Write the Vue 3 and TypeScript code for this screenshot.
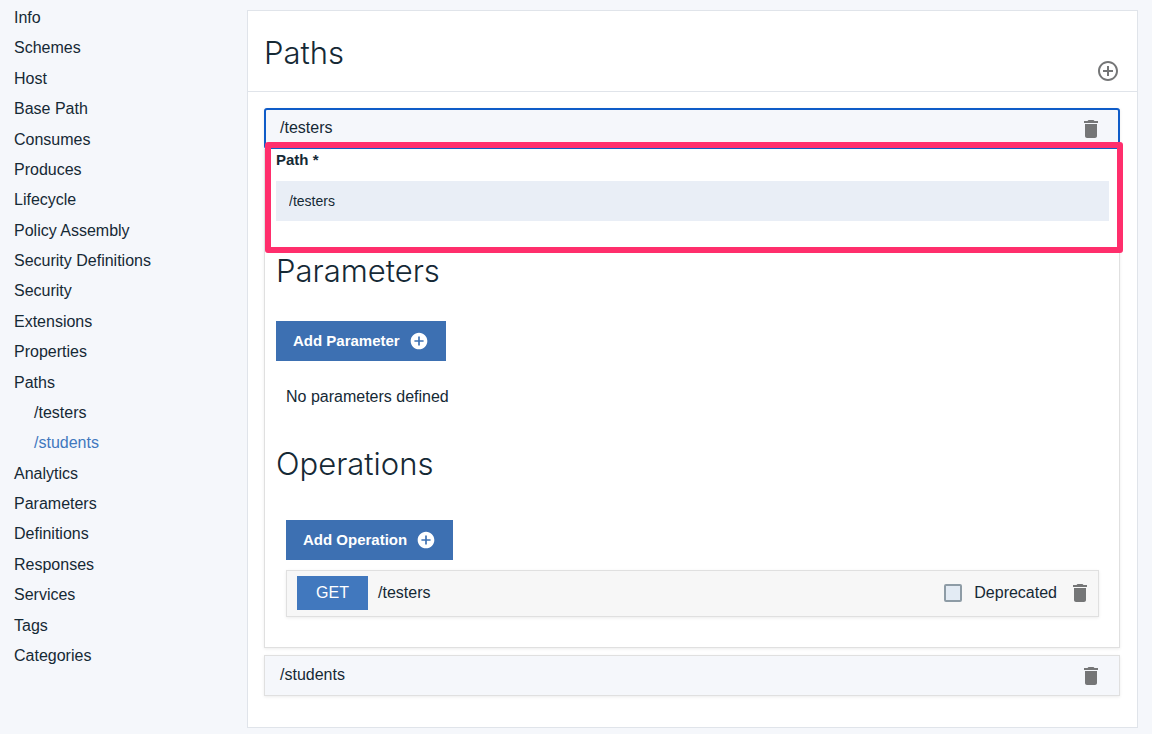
<script setup lang="ts">
import { ref } from 'vue'

interface NavItem {
  label: string
  nested?: boolean
  active?: boolean
}

const navItems: NavItem[] = [
  { label: 'Info' },
  { label: 'Schemes' },
  { label: 'Host' },
  { label: 'Base Path' },
  { label: 'Consumes' },
  { label: 'Produces' },
  { label: 'Lifecycle' },
  { label: 'Policy Assembly' },
  { label: 'Security Definitions' },
  { label: 'Security' },
  { label: 'Extensions' },
  { label: 'Properties' },
  { label: 'Paths' },
  { label: '/testers', nested: true },
  { label: '/students', nested: true, active: true },
  { label: 'Analytics' },
  { label: 'Parameters' },
  { label: 'Definitions' },
  { label: 'Responses' },
  { label: 'Services' },
  { label: 'Tags' },
  { label: 'Categories' },
]

const path = ref<string>('/testers')
const deprecated = ref<boolean>(false)

const trash =
  'M6 19c0 1.1.9 2 2 2h8c1.1 0 2-.9 2-2V7H6v12zM19 4h-3.5l-1-1h-5l-1 1H5v2h14V4z'
const addFilled =
  'M12 2C6.48 2 2 6.48 2 12s4.48 10 10 10 10-4.48 10-10S17.52 2 12 2zm5.5 11h-4.500v4.500h-2v-4.500H6.500v-2h4.500V6.500h2v4.500h4.500v2z'
const addOutline =
  'M13 7h-2v4H7v2h4v4h2v-4h4v-2h-4V7zm-1-5C6.48 2 2 6.48 2 12s4.48 10 10 10 10-4.48 10-10S17.52 2 12 2zm0 18c-4.41 0-8-3.59-8-8s3.59-8 8-8 8 3.59 8 8-3.59 8-8 8z'
</script>

<template>
  <div class="page">
    <nav class="sidebar" aria-label="API sections">
      <ul class="nav-list">
        <li v-for="item in navItems" :key="item.label">
          <a href="#" class="nav-link" :class="{ nested: item.nested, active: item.active }">{{ item.label }}</a>
        </li>
      </ul>
    </nav>

    <main class="content">
      <section class="card">
        <header class="card-header">
          <h1 class="title">Paths</h1>
          <button type="button" class="icon-button" aria-label="Add path">
            <svg viewBox="0 0 24 24" width="24" height="24"><path :d="addOutline" /></svg>
          </button>
        </header>

        <div class="card-body">
          <article class="panel">
            <div class="panel-header selected">
              <button type="button" class="toggle" aria-expanded="true">/testers</button>
              <button type="button" class="icon-button" aria-label="Delete /testers">
                <svg viewBox="0 0 24 24" width="24" height="24"><path :d="trash" /></svg>
              </button>
            </div>

            <div class="panel-body">
              <div class="field">
                <label class="field-label" for="path-input">Path *</label>
                <input id="path-input" v-model="path" class="field-input" type="text" />
                <div class="highlight" aria-hidden="true"></div>
              </div>

              <section class="group">
                <h2 class="title">Parameters</h2>
                <button type="button" class="add-button">
                  <span>Add Parameter</span>
                  <svg viewBox="0 0 24 24" width="20" height="20"><path :d="addFilled" /></svg>
                </button>
                <p class="empty">No parameters defined</p>
              </section>

              <section class="group operations">
                <h2 class="title">Operations</h2>
                <div class="inset">
                  <button type="button" class="add-button">
                    <span>Add Operation</span>
                    <svg viewBox="0 0 24 24" width="20" height="20"><path :d="addFilled" /></svg>
                  </button>
                  <div class="operation">
                    <span class="method">GET</span>
                    <span class="operation-path">/testers</span>
                    <input id="deprecated" v-model="deprecated" class="checkbox" type="checkbox" />
                    <label class="checkbox-label" for="deprecated">Deprecated</label>
                    <button type="button" class="icon-button" aria-label="Delete operation">
                      <svg viewBox="0 0 24 24" width="24" height="24"><path :d="trash" /></svg>
                    </button>
                  </div>
                </div>
              </section>
            </div>
          </article>

          <article class="panel">
            <div class="panel-header">
              <button type="button" class="toggle" aria-expanded="false">/students</button>
              <button type="button" class="icon-button" aria-label="Delete /students">
                <svg viewBox="0 0 24 24" width="24" height="24"><path :d="trash" /></svg>
              </button>
            </div>
          </article>
        </div>
      </section>
    </main>
  </div>
</template>

<style>
body {
  margin: 0;
  background: #f5f7fb;
}
</style>

<style scoped>
.page,
.page * {
  box-sizing: border-box;
}

.page {
  display: grid;
  grid-template-columns: 247px 1fr;
  min-height: 100vh;
  color: #152935;
  font-family: "Liberation Sans", Arial, sans-serif;
  font-size: 16px;
  line-height: 24px;
}

button,
input {
  font: inherit;
  color: inherit;
}

/* Sidebar */
.sidebar {
  display: flex;
  padding: 3px 14px 64px;
}

.nav-list {
  display: flex;
  flex-direction: column;
  justify-content: space-between;
  margin: 0;
  padding: 0;
  list-style: none;
}

.nav-link {
  display: block;
  line-height: 30px;
  color: inherit;
  text-decoration: none;
}

.nav-link.nested {
  padding-left: 20px;
}

.nav-link.active {
  color: #4178be;
}

/* Main card */
.content {
  padding: 10px 14px 7px 0;
}

.card {
  background: #fff;
  border: 1px solid #e0e4ea;
}

.card-header {
  display: flex;
  align-items: flex-end;
  justify-content: space-between;
  padding: 24px 17px 8px 16px;
  border-bottom: 1px solid #e0e4ea;
}

.card-header .title {
  padding-bottom: 12px;
}

.title {
  margin: 0;
  font-family: Inter, "Liberation Sans", sans-serif;
  font-size: 31px;
  font-weight: 300;
  line-height: 36px;
}

.card-body {
  display: flex;
  flex-direction: column;
  gap: 7px;
  padding: 16px 17px 31px 16px;
}

.icon-button {
  display: block;
  flex: none;
  padding: 0;
  border: 0;
  background: none;
  cursor: pointer;
}

.icon-button svg {
  display: block;
  fill: #757677;
}

/* Accordion panels */
.panel {
  background: #fff;
  box-shadow: 0 1px 3px rgba(0, 0, 0, 0.08);
}

.panel-header {
  display: flex;
  align-items: center;
  height: 41px;
  padding: 0 16px 0 15px;
  border: 1px solid #e0e0e0;
  background: #f5f7fb;
}

.panel-header.selected {
  padding: 0 15px 0 14px;
  border: 2px solid #0f5cc8;
  border-radius: 3px;
}

.toggle {
  flex: 1;
  padding: 0 0 2px;
  border: 0;
  background: none;
  text-align: left;
  cursor: pointer;
}

.panel-body {
  padding: 0 10px 30px 11px;
  border: 1px solid #e0e0e0;
  border-top: 0;
}

/* Path field */
.field {
  position: relative;
  margin: 0 -10px 0 -11px;
  padding: 0 10px 32px 11px;
}

.field-label {
  display: block;
  margin-bottom: 10px;
  font-size: 15px;
  font-weight: 700;
  line-height: 22px;
}

.field-input {
  display: block;
  width: 100%;
  height: 40px;
  padding: 0 13px;
  border: 0;
  border-radius: 0;
  outline: 0;
  background: #e9eef6;
  font-size: 14px;
}

.highlight {
  position: absolute;
  inset: -7px -4px 0 0;
  border: 6px solid #ff2e6c;
  border-radius: 3px;
  pointer-events: none;
}

/* Parameters and operations */
.group .title {
  margin-bottom: 32px;
}

.operations {
  margin-top: 37px;
}

.operations .title {
  margin-bottom: 38px;
}

.add-button {
  display: flex;
  align-items: center;
  gap: 9px;
  height: 40px;
  padding: 0 17px;
  border: 0;
  background: #3d70b2;
  color: #fff;
  font-size: 15px;
  font-weight: 700;
  cursor: pointer;
}

.add-button svg {
  fill: #fff;
}

.empty {
  margin: 24px 10px 0;
}

.inset {
  padding: 0 10px;
}

.operation {
  display: flex;
  align-items: center;
  margin-top: 10px;
  padding: 5px 6px 6px 10px;
  border: 1px solid #e0e0e0;
  background: #f7f7f7;
  box-shadow: 0 1px 3px rgba(0, 0, 0, 0.08);
}

.method {
  width: 71px;
  background: #4178be;
  color: #fff;
  line-height: 34px;
  text-align: center;
}

.operation-path {
  flex: 1;
  margin-left: 10px;
}

.checkbox {
  appearance: none;
  width: 18px;
  height: 18px;
  margin: 0;
  border: 2px solid #8e9ca6;
  border-radius: 2px;
  background: #e3ebf4;
}

.checkbox:checked {
  background: #3d70b2;
}

.checkbox-label {
  margin: 0 11px 0 12px;
}
</style>
